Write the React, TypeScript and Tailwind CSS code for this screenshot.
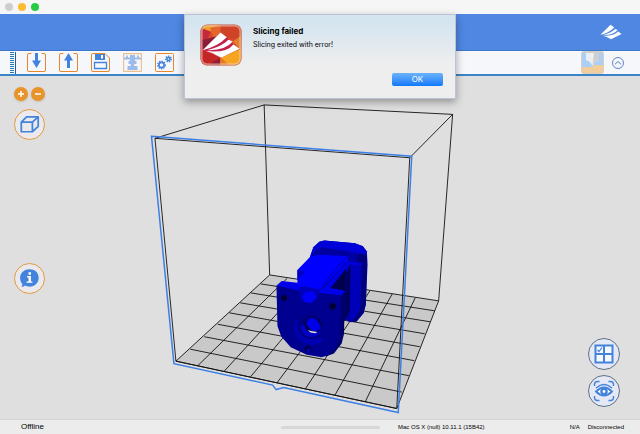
import type { ReactNode } from "react";

const gridAcross = [
  [190, 350, 402, 393],
  [204, 337.5, 409, 376.5],
  [217.5, 325, 414.5, 361.5],
  [229, 313.5, 420, 347.5],
  [240, 303.5, 425, 334.5],
  [250.5, 293.5, 430.5, 322.5],
  [260.5, 284.5, 435, 311.5],
];

const gridDeep = [
  [197.5, 366.5, 287, 279],
  [224, 372, 306.5, 282],
  [250.5, 377.5, 327.5, 285],
  [277, 383.5, 348.5, 288],
  [305.5, 389.5, 370, 291.5],
  [335, 396, 392.5, 294.5],
  [365.5, 402.5, 415.5, 298.5],
];

const Mark = () => (
  <g fill="#fff">
    <path d="M66 150 L120 97 L139 111 Q112 139 66 150Z" />
    <path d="M80 150 Q124 140 144 119 L157 124 Q134 152 80 150Z" />
    <path d="M76 153 Q138 160 159 133 L178 146 L122 173 Q100 158 76 153Z" />
  </g>
);

const AppLogo = () => (
  <svg viewBox="58 71 127 127" className="size-full" aria-hidden="true">
    <defs>
      <clipPath id="tile">
        <rect x="60" y="73" width="123" height="123" rx="20" />
      </clipPath>
    </defs>
    <g clipPath="url(#tile)">
      <path fill="#d9472b" d="M58 71h127v127H58z" />
      <path fill="#f0a02c" d="M58 71h62v12L90 94 58 82z" />
      <path fill="#e5662c" d="M88 84 120 73v24L100 116z" />
      <path fill="#c22a3c" d="M58 82 90 94 67 150H58z" />
      <path fill="#8b1c3c" d="M64 120 108 108 66 150z" />
      <path fill="#cf4326" d="M120 73h65v50l-48-12-17-14z" />
      <path fill="#e27f2b" d="M157 124 185 104v40l-7 2z" />
      <path fill="#c42627" d="M58 150h10l54 23-40 25H58z" />
      <path fill="#921d35" d="M84 196 119 172v26z" />
      <path fill="#e87a25" d="M119 172 150 198h-31z" />
      <path fill="#f5a51f" d="M122 173 185 144v54h-38z" />
      <path fill="#c51f4e" d="M66 150 139 111 159 133 122 168z" />
    </g>
    <Mark />
    <rect x="61" y="74" width="121" height="121" rx="19" fill="none" stroke="#c98573" strokeWidth="3" />
    <rect x="64" y="77" width="115" height="115" rx="16" fill="none" stroke="#fbe3d8" strokeWidth="2" />
  </svg>
);

const ToolButton = ({ label, faded, children }: { label: string; faded?: boolean; children: ReactNode }) => (
  <button type="button" aria-label={label} disabled={faded} className={faded ? "size-[19px] opacity-50" : "size-[19px]"}>
    <svg viewBox="0 0 19 19" className="size-full" fill="none">
      {children}
    </svg>
  </button>
);

const RoundButton = ({ label, dark, children }: { label: string; dark?: boolean; children: ReactNode }) => (
  <button
    type="button"
    aria-label={label}
    className={
      dark
        ? "size-8 rounded-full border border-[#5f7186] bg-[#e4e9f5]"
        : "size-[31px] rounded-full border border-[#e59a3c] bg-[#e9e9ee]"
    }
  >
    <svg viewBox="0 0 30 30" className="size-full" fill="none">
      {children}
    </svg>
  </button>
);

const Gear = ({ x, y, r }: { x: number; y: number; r: number }) => (
  <g stroke="#4383dc">
    <circle cx={x} cy={y} r={r} strokeWidth="1.6" />
    <circle cx={x} cy={y} r={r + 1.2} strokeWidth="1.4" strokeDasharray="1.3 1.2" />
  </g>
);

const Toolbar = () => (
  <div className="flex h-[26px] items-center border-t border-b-2 border-t-[#3b79c8] border-b-[#3c84c8] bg-[#f6f7fb] px-[10px]">
    <svg viewBox="0 0 6 22" className="mr-[11px] h-[22px] w-[6px]" aria-hidden="true">
      <path d="M2 0v22" stroke="#2a78b8" strokeWidth="4" strokeDasharray="1 1" />
      <path d="M5.500 0v22" stroke="#1f6098" strokeWidth="1" />
    </svg>
    <div className="flex gap-[13px]">
      <ToolButton label="Load">
        <path d="M4.500.500H2q-1.500 0-1.500 1.500v15q0 1.500 1.500 1.500h15q1.500 0 1.500-1.500V2q0-1.500-1.500-1.500h-2.500" stroke="#e8872a" />
        <path d="M8 0h3v7.500h3L9.500 15 5 7.500h3z" fill="#4383dc" />
      </ToolButton>
      <ToolButton label="Export">
        <path d="M4.500.500H2q-1.500 0-1.500 1.500v15q0 1.500 1.500 1.500h15q1.500 0 1.500-1.500V2q0-1.500-1.500-1.500h-2.500" stroke="#e8872a" />
        <path d="M8 15h3V7.500h3L9.500 0 5 7.500h3z" fill="#4383dc" />
      </ToolButton>
      <ToolButton label="Save">
        <path d="M2 .500h12L18.500 5v12q0 1.500-1.500 1.500H2Q.500 18.500.500 17V2Q.500.500 2 .500z" stroke="#e8872a" />
        <path d="M4 1h10v6H4z" fill="#4383dc" />
        <path d="M10 2h2v3.500h-2z" fill="#fff" />
        <path d="M3.500 9.500h12v6h-12z" stroke="#4383dc" strokeWidth="1.300" />
      </ToolButton>
      <ToolButton label="Print" faded>
        <rect x=".5" y=".5" width="18" height="18" rx="1" stroke="#e8872a" strokeWidth="1.300" />
        <path d="M1 5.500h17M4 2.500v3M15 2.500v3" stroke="#4383dc" strokeWidth="1.800" />
        <path d="M7 2h5v6h1.500v3h-2l-.5 2h3.500v4h-10v-4H8l-.5-2h-2V8H7z" fill="#4383dc" />
      </ToolButton>
      <ToolButton label="Slice settings">
        <rect x=".5" y=".5" width="18" height="18" rx="1" stroke="#e8872a" />
        <Gear x={6.5} y={12} r={2.6} />
        <Gear x={13.5} y={6} r={1.6} />
      </ToolButton>
    </div>
    <div className="ml-auto flex items-center gap-2">
      <button type="button" aria-label="Printer" className="size-[23px] overflow-hidden rounded-sm">
        <svg viewBox="0 0 23 23" className="size-full">
          <path fill="#acd0f5" d="M0 0h23v23H0z" />
          <path fill="#f0cd9b" d="M0 0h23v1.500H0zM0 16h12v-2h11v9H0z" />
          <path fill="#eceff2" d="M5 2h13v7l-4 2-2.500 4L9 11 5 9z" />
          <path fill="#cfcfd2" d="M13 2h5v7l-4 2-2.500 4z" />
          <path fill="none" stroke="#d4d0c8" d="M.5.500h22v22H.5z" />
        </svg>
      </button>
      <button type="button" aria-label="Collapse toolbar" className="mr-[6px] size-3">
        <svg viewBox="0 0 12 12" className="size-full" fill="none" stroke="#4c79bf">
          <circle cx="6" cy="6" r="5.500" strokeWidth=".9" />
          <path d="M3 7.300 6 4.500l3 2.800" />
        </svg>
      </button>
    </div>
  </div>
);

const Model = () => (
  <g transform="translate(260 230) scale(.33333)">
    <path fill="#0000a6" d="M150 82 160 53 178 37 193 33 285 41 309 50 321 65 323 105 318 225 311 252 290 277 272 279 252 270z" />
    <path fill="#0000d8" d="M150 82 160 53 178 37 193 33 285 41 309 50 321 68 310 77 290 70 186 54 166 65 154 84z" />
    <path fill="#0000a0" d="M154 80 170 60 186 54 265 65 262 78 175 76z" />
    <path fill="#00007c" d="M292 73 310 73 321 82 318 225 311 250 290 277 274 278 292 255z" />
    <path fill="#0000b8" d="M272 104 306 103 301 240 285 265 270 272z" />
    <path fill="#000062" d="M256 108 272 104 270 245 253 276 210 180z" />
    <path fill="#0000c8" d="M170 190 265 90 270 110 215 200z" />
    <path fill="#0000ff" d="M112 122 152 80 180 76 265 80 262 98 185 178 190 200 112 190z" />
    <path fill="#0000bf" d="M112 122 137 125 112 151z" />
    <path fill="#0000e6" d="M255 96 306 101 304 107 266 105 212 180 178 195z" />
    <path d="M262 80 184 171M262 97 182 181" stroke="#000078" strokeWidth="2" fill="none" />
    <path fill="#000050" d="M258 118 256 188 205 184z" />
    <path fill="#00006c" d="M240 193 256 184 252 315 245 343 222 373 197 382z" />
    <path fill="#000090" d="M49 168 120 178 128 205 150 207 175 188 244 197 240 318 228 356 205 378 185 384 140 377 92 354 63 321 52 290z" />
    <path fill="#0000ed" d="M49 168 65 155 112 160 121 178 118 184zM178 190 210 176 256 184 244 198z" />
    <path fill="#0000ba" d="M116 176 129 170 182 180 170 207 154 221 134 219 122 208z" />
    <path fill="#0000fa" d="M126 207 133 190 158 185 170 204 155 220 136 219z" />
    <circle cx="72" cy="206" r="9" fill="#000030" />
    <circle cx="218" cy="231" r="10" fill="#000035" />
    <path fill="#0000b0" d="M108 268 Q92 310 122 335 Q150 354 182 341 L191 326 Q147 331 125 302z" />
    <circle cx="151" cy="292" r="37" fill="#000080" />
    <path fill="#0000c8" d="M121 290 Q124 318 150 323 Q174 325 182 307 Q147 316 132 285z" />
    <ellipse cx="159" cy="288" rx="25" ry="23" fill="#00004a" />
    <path fill="#0000e8" d="M139 284 Q142 266 158 266 Q178 271 183 299 Q170 308 153 304z" />
    <path fill="#d8d8ec" d="M143 302 153 305 173 308 165 312 151 310z" />
    <circle cx="144" cy="360" r="9" fill="#000038" />
    <path fill="#0000d0" d="m140 360 11-3-4 12-6 1z" />
  </g>
);

const BuildVolume = () => (
  <svg
    viewBox="0 76 640 344"
    className="absolute inset-0 size-full"
    fill="none"
    role="img"
    aria-label="Model on the build plate"
  >
    <path d="M175.500 362 269.500 275.500 439 301.500 397 409.500z" fill="#c9c9c9" />
    <g stroke="#111" strokeWidth=".9">
      {[...gridAcross, ...gridDeep].map(([x1, y1, x2, y2]) => (
        <line key={`${x1}-${y1}`} x1={x1} y1={y1} x2={x2} y2={y2} />
      ))}
      <path d="M175.500 362 269.500 275.500 439 301.500 397 409.500z" />
      <path d="M154.500 138.500 264 105l189 9.500-43 43.500" />
      <path d="M264 105 269.500 275.500M453 114.500 439 301.500" />
      <path d="M154.500 138.500 410 158 397 409.500 175.500 362z" />
    </g>
    <path
      d="M151 136.500 412 156.500 398.500 413.500 283.500 388.500 276 390.500 272.500 386 173.500 364.500z"
      stroke="#3e7fe6"
      strokeWidth="1.500"
    />
    <Model />
  </svg>
);

const Dialog = () => (
  <div
    role="alertdialog"
    aria-labelledby="dialog-title"
    className="absolute left-1/2 top-[14px] flex w-[272px] -translate-x-1/2 gap-[11px] border border-[#b9c4d4] bg-linear-to-b from-[#d5e5f0] from-10% to-[#eeeeee] to-60% pt-[9px] pr-3 pb-3 pl-[15px] shadow-[0_3px_8px_rgba(0,0,0,0.35)]"
  >
    <div className="size-[42px] shrink-0">
      <AppLogo />
    </div>
    <div className="flex grow flex-col text-black">
      <h1 id="dialog-title" className="font-[Inter,sans-serif] text-[8px] leading-[14px] font-bold">
        Slicing failed
      </h1>
      <p className="font-[Inter,sans-serif] text-[7px] leading-[14px]">Slicing exited with error!</p>
      <button
        type="button"
        className="mt-[21px] h-[13px] w-[51px] self-end rounded-[2px] bg-linear-to-b from-[#6bb3fa] to-[#0a78fb] font-[Inter,sans-serif] text-[8px] leading-[13px] text-white"
      >
        OK
      </button>
    </div>
  </div>
);

export default function App() {
  return (
    <div className="relative flex min-h-screen flex-col bg-[#dfdfdf]">
      <div className="flex h-[14px] items-center gap-[5px] bg-[#f6f6f6] px-[5px]">
        <button type="button" aria-label="Close" className="size-2 rounded-full bg-[#cecece]" />
        <button type="button" aria-label="Minimize" className="size-2 rounded-full bg-[#fbbc2f]" />
        <button type="button" aria-label="Zoom" className="size-2 rounded-full bg-[#28ca42]" />
      </div>
      <header className="flex h-9 items-center justify-end bg-[#4f87e2] pr-[18px]">
        <svg viewBox="64 95 116 80" className="h-4 w-[22px]" aria-hidden="true">
          <Mark />
        </svg>
      </header>
      <Toolbar />

      <main className="relative flex grow justify-between">
        <BuildVolume />
        <div className="relative flex flex-col pt-[11px] pl-[14px]">
          <div className="flex gap-[3px]">
            {["+", "−"].map((sign) => (
              <button
                key={sign}
                type="button"
                aria-label={sign === "+" ? "Zoom in" : "Zoom out"}
                className="size-[14px] rounded-full bg-[#e8942a] shadow-sm"
              >
                <svg viewBox="0 0 14 14" className="size-full" stroke="#fff" strokeWidth="1.500">
                  <path d={sign === "+" ? "M4 7h6M7 4v6" : "M4 7h6"} />
                </svg>
              </button>
            ))}
          </div>
          <div className="mt-2 h-[154px]">
            <RoundButton label="View cube">
              <path
                d="M6.500 12.500 12 7h12v10l-6 5.500H6.500zM6.500 12.500H18v10M18 12.500l6-5.500"
                stroke="#4383dc"
                strokeWidth="1.800"
                strokeLinejoin="round"
              />
            </RoundButton>
          </div>
          <RoundButton label="Info">
            <path
              d="M15 5.500c5.500 0 9.500 3.600 9.500 8.700s-4 9.300-9.500 9.300c-1.800 0-3.400-.4-4.800-1.200-.8.900-2 1.400-3.700 1.300.8-.8 1.200-1.700 1.100-2.900-1.500-1.600-2.300-3.700-2.300-6.200C5.300 9.100 9.500 5.500 15 5.500z"
              fill="#4383dc"
            />
            <path d="M14 8.500h2.500V11H14zM12.500 12.500h4V18H18v1.500h-6V18h2v-4h-1.500z" fill="#fff" />
          </RoundButton>
        </div>
        <div className="relative flex flex-col justify-end gap-[5px] pr-5 pb-3">
          <RoundButton label="Plate layout" dark>
            <path fill="#4383dc" d="M5.500 5.500h19v19h-19z" />
            <path fill="#f5f8fd" d="M7.500 7.500h6.500V14H7.500zM16 7.500h6.500V14H16zM7.500 16h6.500v6.500H7.500zM16 16h6.500v6.500H16z" />
            <path d="m8.500 11 1.500 1.500L13 8.500" stroke="#4383dc" strokeWidth="1.200" />
          </RoundButton>
          <RoundButton label="View mode" dark>
            <path
              d="M5.500 10V8.500q0-3 3-3h2M19.500 5.500h2q3 0 3 3V10M24.500 20v1.500q0 3-3 3h-2M10.500 24.500h-2q-3 0-3-3V20"
              stroke="#4383dc"
              strokeWidth="1.400"
            />
            <path d="M7 15.500q8-8 16 0-8 8-16 0z" fill="#fff" stroke="#4383dc" strokeWidth="1.800" />
            <circle cx="15" cy="15.500" r="2.600" stroke="#4383dc" strokeWidth="2.400" />
            <path d="M7 12q8-7 16 0" stroke="#4383dc" strokeWidth="1.300" />
          </RoundButton>
        </div>
      </main>

      <footer className="flex h-[15px] items-center border-t border-[#d2d2d2] bg-[#ececec] pr-4 pl-[21px] font-['Liberation_Sans',sans-serif] text-[6px] leading-[14px] text-black">
        <span className="w-[260px] text-[8px]">Offline</span>
        <div className="h-[3px] w-[99px] rounded-full bg-[#d7d7d7]" />
        <span className="ml-[18px]">Mac OS X (null) 10.11.1 (15B42)</span>
        <span className="mr-2 ml-auto">N/A</span>
        <span>Disconnected</span>
      </footer>

      <Dialog />
    </div>
  );
}
